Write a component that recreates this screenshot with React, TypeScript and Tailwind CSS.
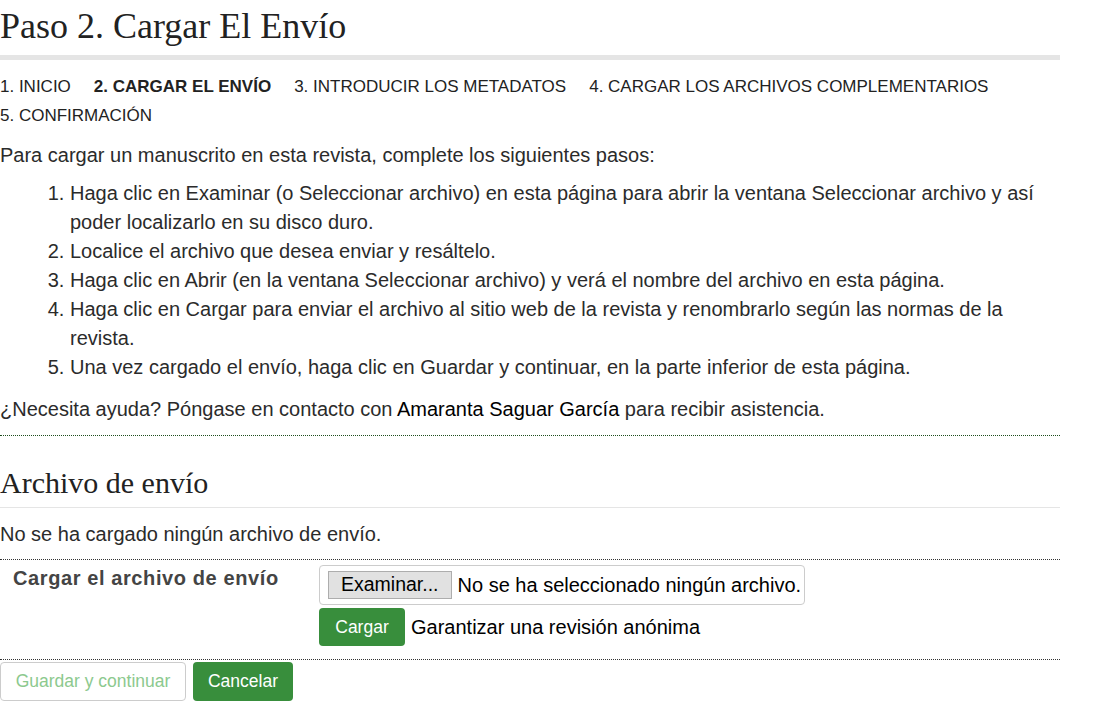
export default function App() {
  const steps = [
    "Haga clic en Examinar (o Seleccionar archivo) en esta página para abrir la ventana Seleccionar archivo y así poder localizarlo en su disco duro.",
    "Localice el archivo que desea enviar y resáltelo.",
    "Haga clic en Abrir (en la ventana Seleccionar archivo) y verá el nombre del archivo en esta página.",
    "Haga clic en Cargar para enviar el archivo al sitio web de la revista y renombrarlo según las normas de la revista.",
    "Una vez cargado el envío, haga clic en Guardar y continuar, en la parte inferior de esta página.",
  ]

  return (
    <div className="w-[1060px] bg-white text-[#2b2b2b] font-['Liberation_Sans',Arial,sans-serif]">
      <h1 className="h-[55px] pt-[4px] text-[36px] leading-[44px] font-['Liberation_Serif','Times_New_Roman',serif] text-[#222]">
        Paso 2. Cargar El Envío
      </h1>
      <div className="h-[5px] bg-[#e5e5e5]" />

      <nav className="mt-[12px] flex flex-wrap gap-x-[23px] text-[17px] leading-[29px] uppercase text-[#222]">
        <span>1. Inicio</span>
        <span className="font-bold">2. Cargar el envío</span>
        <span>3. Introducir los metadatos</span>
        <span>4. Cargar los archivos complementarios</span>
        <span>5. Confirmación</span>
      </nav>

      <p className="mt-[11px] text-[20px] leading-[29px]">
        Para cargar un manuscrito en esta revista, complete los siguientes pasos:
      </p>
      <ol className="mt-[9px] list-decimal pl-[70px] text-[20px] leading-[29px]">
        {steps.map((s) => (
          <li key={s}>{s}</li>
        ))}
      </ol>
      <p className="mt-[13px] text-[20px] leading-[29px]">
        ¿Necesita ayuda? Póngase en contacto con <span className="text-black">Amaranta Saguar García</span> para recibir
        asistencia.
      </p>

      <div className="mt-[11px] border-t border-dotted border-[#1d4d1d]" />

      <h2 className="mt-[29px] pb-[6px] border-b border-[#e5e5e5] text-[30px] leading-[36px] font-['Liberation_Serif','Times_New_Roman',serif] text-[#222]">
        Archivo de envío
      </h2>
      <p className="mt-[12px] text-[20px] leading-[29px]">No se ha cargado ningún archivo de envío.</p>

      <div className="mt-[10px] border-t border-dotted border-[#333]" />

      <div className="flex pt-[5px] pb-[13px]">
        <div className="w-[319px] pl-[13px] pt-[1px] text-[20px] leading-[24px] font-bold tracking-[0.6px] text-[#444]">
          Cargar el archivo de envío
        </div>
        <div className="flex flex-col gap-[3px]">
          <div className="flex h-[40px] w-[486px] items-center gap-[6px] whitespace-nowrap rounded-[4px] border border-[#ccc] pl-[8px] text-[20px] text-black">
            <span className="flex h-[28px] shrink-0 items-center border border-[#adadad] bg-[#e1e1e1] px-[12px] text-[19.5px]">
              Examinar...
            </span>
            <span>No se ha seleccionado ningún archivo.</span>
          </div>
          <div className="flex items-center gap-[6px]">
            <button className="h-[38px] w-[86px] rounded-[4px] bg-[#388e3c] text-[17.5px] text-white">Cargar</button>
            <span className="text-[20px] text-black">Garantizar una revisión anónima</span>
          </div>
        </div>
      </div>

      <div className="border-t border-dotted border-[#333]" />

      <div className="mt-[2px] flex gap-[7px] text-[17.5px]">
        <button className="h-[39px] w-[186px] rounded-[4px] border border-[#ccc] bg-white text-[#8cc98e]">
          Guardar y continuar
        </button>
        <button className="h-[39px] w-[100px] rounded-[4px] bg-[#388e3c] text-white">Cancelar</button>
      </div>
    </div>
  )
}
